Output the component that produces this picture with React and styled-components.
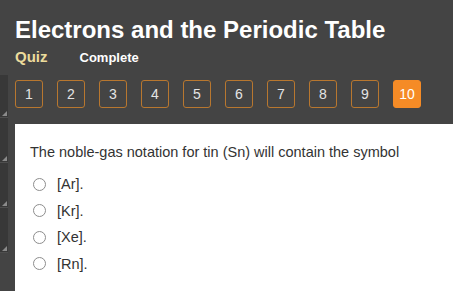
import React from 'react'
import styled, { createGlobalStyle } from 'styled-components'

const GlobalStyle = createGlobalStyle`
  html, body {
    margin: 0;
    padding: 0;
    height: 100%;
    background: #444444;
    overflow: hidden;
  }
  body {
    font-family: 'Liberation Sans', Arial, sans-serif;
  }
`

const StyledPage = styled.div`
  display: flex;
  flex-direction: column;
  width: 453px;
  height: 291px;
  background: #444444;
  overflow: hidden;
`
const StyledHeader = styled.header`
  padding: 16px 0 0 15px;
  height: 75px;
  box-sizing: border-box;
`
const StyledTitle = styled.h1`
  margin: 0;
  color: #ffffff;
  font-size: 24px;
  font-weight: bold;
  line-height: 28px;
  white-space: nowrap;
`
const StyledSubtitle = styled.div`
  display: flex;
  align-items: baseline;
  gap: 32px;
  margin-top: 4px;
`
const StyledKind = styled.span`
  color: #ecdc9c;
  font-size: 15px;
  font-weight: bold;
`
const StyledStatus = styled.span`
  color: #ffffff;
  font-size: 13px;
  font-weight: bold;
`
const StyledBody = styled.div`
  display: flex;
  flex: 1;
  min-height: 0;
`
const StyledRail = styled.div`
  display: flex;
  flex-direction: column;
  width: 8px;
  flex: 0 0 8px;
`
const StyledRailSegment = styled.div`
  position: relative;
  height: ${({ $height }) => $height}px;
  background: #383838;
  border-bottom: 1px solid #4e4e4e;
  box-sizing: border-box;

  &::after {
    content: '';
    position: absolute;
    right: 1px;
    bottom: 1px;
    width: 0;
    height: 0;
    border-left: 5px solid transparent;
    border-bottom: 5px solid #8a8a8a;
  }
`
const StyledMain = styled.main`
  display: flex;
  flex-direction: column;
  flex: 1;
  margin-left: 7px;
`
const StyledNav = styled.nav`
  display: flex;
  gap: 14px;
  padding-top: 5px;
  height: 49px;
  box-sizing: border-box;
`
const StyledPageButton = styled.button`
  display: flex;
  align-items: center;
  justify-content: center;
  width: 28px;
  height: 28px;
  padding: 0;
  border: 1px solid ${({ $active }) => ($active ? '#f58b26' : '#b8772f')};
  border-radius: 3px;
  background: ${({ $active }) => ($active ? '#f58b26' : 'transparent')};
  color: ${({ $active }) => ($active ? '#ffffff' : '#e4e4e4')};
  font-family: 'Liberation Sans', Arial, sans-serif;
  font-size: 14px;
  cursor: pointer;
`
const StyledPanel = styled.section`
  flex: 1;
  background: #ffffff;
  padding: 20px 0 0 15px;
  box-sizing: border-box;
`
const StyledQuestion = styled.p`
  margin: 0 0 14px;
  color: #333333;
  font-size: 14.5px;
  line-height: 17px;
  white-space: nowrap;
`
const StyledOptions = styled.ul`
  display: flex;
  flex-direction: column;
  gap: 8.5px;
  margin: 0;
  padding: 0 0 0 3px;
  list-style: none;
`
const StyledOption = styled.li`
  display: flex;
  align-items: center;
  gap: 11px;
  height: 18px;
  color: #333333;
  font-size: 14.5px;
`
const StyledRadio = styled.span`
  width: 11px;
  height: 11px;
  border: 1px solid #8d8d8d;
  border-radius: 50%;
  background: #ffffff;
`

const pages = [1, 2, 3, 4, 5, 6, 7, 8, 9, 10]
const options = ['[Ar].', '[Kr].', '[Xe].', '[Rn].']
const rail = [43, 45, 45, 45]

const App = () => {
  const current = 10

  return (
    <>
      <GlobalStyle />
      <StyledPage>
        <StyledHeader>
          <StyledTitle>Electrons and the Periodic Table</StyledTitle>
          <StyledSubtitle>
            <StyledKind>Quiz</StyledKind>
            <StyledStatus>Complete</StyledStatus>
          </StyledSubtitle>
        </StyledHeader>
        <StyledBody>
          <StyledRail>
            {rail.map((height, i) => (
              <StyledRailSegment key={i} $height={height} />
            ))}
          </StyledRail>
          <StyledMain>
            <StyledNav>
              {pages.map((page) => (
                <StyledPageButton key={page} $active={page === current}>
                  {page}
                </StyledPageButton>
              ))}
            </StyledNav>
            <StyledPanel>
              <StyledQuestion>
                The noble-gas notation for tin (Sn) will contain the symbol
              </StyledQuestion>
              <StyledOptions>
                {options.map((option) => (
                  <StyledOption key={option}>
                    <StyledRadio />
                    {option}
                  </StyledOption>
                ))}
              </StyledOptions>
            </StyledPanel>
          </StyledMain>
        </StyledBody>
      </StyledPage>
    </>
  )
}

export default App
